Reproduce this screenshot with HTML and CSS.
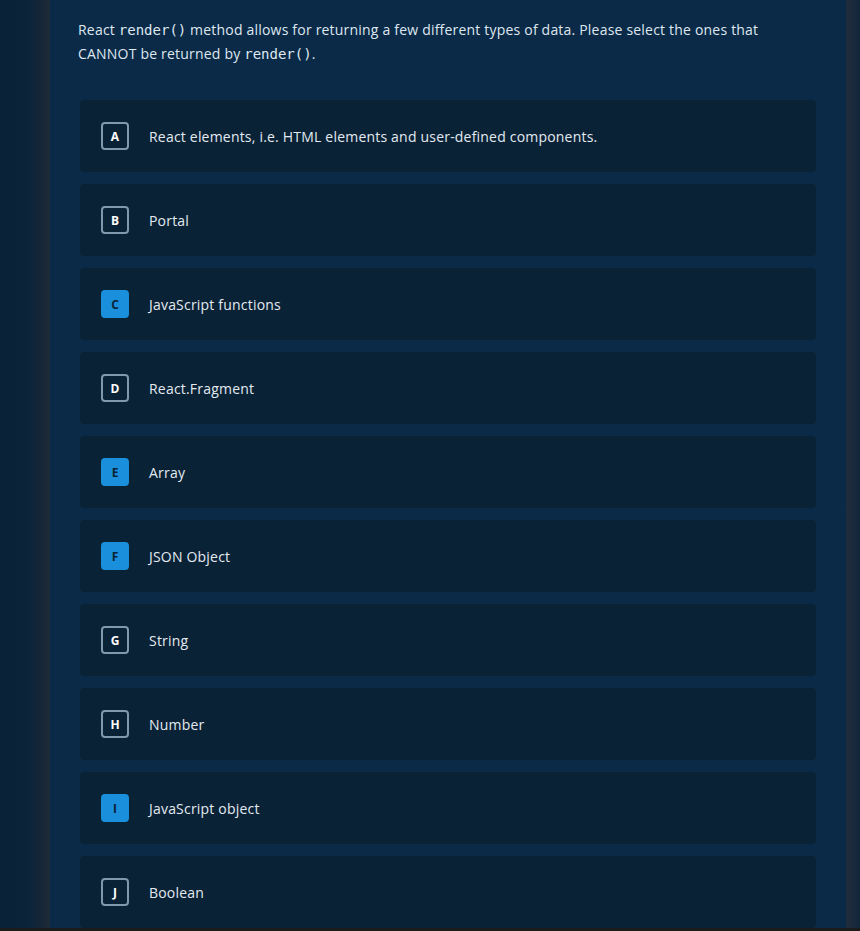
FILE: index.html
```html
<!DOCTYPE html>
<html>
<head>
<meta charset="utf-8">
<link rel="stylesheet" href="styles.css">
</head>
<body>
<div class="frame">
  <div class="side-left"></div>
  <main class="panel">
    <p class="question">React <code>render()</code> method allows for returning a few different types of data. Please select the ones that CANNOT be returned by <code>render()</code>.</p>
    <div class="options">
      <div class="option"><span class="badge">A</span><span class="label">React elements, i.e. HTML elements and user-defined components.</span></div>
      <div class="option"><span class="badge">B</span><span class="label">Portal</span></div>
      <div class="option"><span class="badge selected">C</span><span class="label">JavaScript functions</span></div>
      <div class="option"><span class="badge">D</span><span class="label">React.Fragment</span></div>
      <div class="option"><span class="badge selected">E</span><span class="label">Array</span></div>
      <div class="option"><span class="badge selected">F</span><span class="label">JSON Object</span></div>
      <div class="option"><span class="badge">G</span><span class="label">String</span></div>
      <div class="option"><span class="badge">H</span><span class="label">Number</span></div>
      <div class="option"><span class="badge selected">I</span><span class="label">JavaScript object</span></div>
      <div class="option"><span class="badge">J</span><span class="label">Boolean</span></div>
    </div>
  </main>
  <div class="side-right"></div>
</div>
<div class="bottom-bar"></div>
</body>
</html>
```
FILE: styles.css
```css
html, body {
  margin: 0;
  padding: 0;
  height: 931px;
  overflow: hidden;
  background: #1b1b1b;
  font-family: "Open Sans", "Noto Sans", sans-serif;
}

.frame {
  display: flex;
  height: 928px;
  overflow: hidden;
}

.side-left {
  width: 50px;
  flex: none;
  background: linear-gradient(to right, #0a2238 0%, #0b2339 55%, #142637 80%, #1f2b38 100%);
}

.side-right {
  width: 14px;
  flex: none;
  background: linear-gradient(to right, #1f2c3b 0%, #1b2a3b 50%, #12253a 100%);
}

.panel {
  flex: 1;
  background: #0a2a48;
  padding: 18px 30px 0;
  box-sizing: border-box;
}

.question {
  margin: 0 40px 34px -2px;
  font-size: 14px;
  line-height: 24px;
  letter-spacing: 0.2px;
  color: #dfe7ef;
}

.question code {
  font-family: "DejaVu Sans Mono", monospace;
  font-size: 14px;
  letter-spacing: 0;
}

.options {
  display: flex;
  flex-direction: column;
  gap: 12px;
}

.option {
  display: flex;
  align-items: center;
  gap: 20px;
  height: 72px;
  flex: none;
  padding-left: 21px;
  background: #0a2236;
  border-radius: 4px;
}

.badge {
  width: 28px;
  height: 28px;
  box-sizing: border-box;
  border: 2px solid #7f99ad;
  border-radius: 4px;
  display: flex;
  align-items: center;
  justify-content: center;
  color: #ffffff;
  font-size: 12px;
  font-weight: 700;
  flex: none;
}

.badge.selected {
  background: #1a8fdb;
  border-color: #1a8fdb;
  color: #0a2236;
}

.label {
  font-size: 14px;
  letter-spacing: 0.2px;
  color: #e3eaf1;
}

.bottom-bar {
  height: 3px;
  background: #1b1b1b;
}
```
